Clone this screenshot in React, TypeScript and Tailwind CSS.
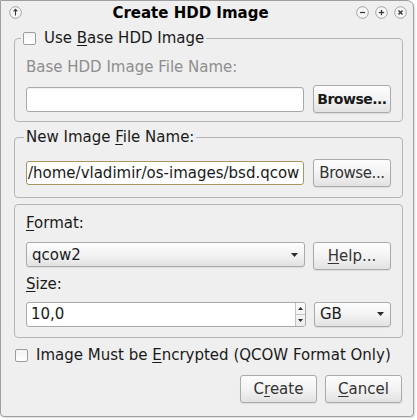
import React from 'react';

function TitleIcon({ kind }: { kind: 'up' | 'min' | 'max' | 'close' }) {
  return (
    <svg width="13" height="13" viewBox="0 0 13 13">
      <circle cx="6.5" cy="6.5" r="5.8" fill="#f7f7f7" stroke="#a2a2a2" strokeWidth="1" />
      {kind === 'up' && (
        <>
          <line x1="6.5" y1="3.5" x2="6.5" y2="9.5" stroke="#3a3a3a" strokeWidth="1.1" />
          <path d="M4.6 5.4 L6.5 3.3 L8.4 5.4" fill="none" stroke="#3a3a3a" strokeWidth="1.1" />
        </>
      )}
      {kind === 'min' && <line x1="4" y1="6.5" x2="9" y2="6.5" stroke="#3a3a3a" strokeWidth="1.3" />}
      {kind === 'max' && (
        <>
          <line x1="3.8" y1="6.5" x2="9.2" y2="6.5" stroke="#3a3a3a" strokeWidth="1.3" />
          <line x1="6.5" y1="3.8" x2="6.5" y2="9.2" stroke="#3a3a3a" strokeWidth="1.3" />
        </>
      )}
      {kind === 'close' && (
        <>
          <line x1="4.5" y1="4.5" x2="8.5" y2="8.5" stroke="#3a3a3a" strokeWidth="1.5" />
          <line x1="8.5" y1="4.5" x2="4.5" y2="8.5" stroke="#3a3a3a" strokeWidth="1.5" />
        </>
      )}
    </svg>
  );
}

function CheckBox() {
  return (
    <span className="inline-block w-[13px] h-[13px] rounded-[2px] border border-[#9d9d9d] bg-linear-to-b from-[#f4f4f4] to-[#ffffff] shrink-0" />
  );
}

function Arrow() {
  return (
    <svg width="7" height="4" viewBox="0 0 7 4" className="shrink-0">
      <path d="M0 0 L7 0 L3.5 4 Z" fill="#2a2a2a" />
    </svg>
  );
}

function Button({ children, bold, className = '' }: { children: React.ReactNode; bold?: boolean; className?: string }) {
  return (
    <div
      className={`h-[28px] flex items-center justify-center rounded-[3px] border border-[#aaaaaa] bg-linear-to-b from-[#fdfdfd] via-[#f3f3f3] to-[#e2e2e2] shadow-[0_1px_1px_rgba(0,0,0,0.08)] shrink-0 ${bold ? 'font-bold text-[14px] tracking-[-0.5px] text-[#1a1a1a]' : 'text-[#333]'} ${className}`}
    >
      {children}
    </div>
  );
}

function Combo({ value, className = '' }: { value: string; className?: string }) {
  return (
    <div
      className={`flex items-center justify-between pl-[5px] pr-[6px] rounded-[3px] border border-[#aaaaaa] bg-linear-to-b from-[#fdfdfd] via-[#f3f3f3] to-[#e2e2e2] shadow-[0_1px_1px_rgba(0,0,0,0.08)] ${className}`}
    >
      <span>{value}</span>
      <Arrow />
    </div>
  );
}

export default function App() {
  return (
    <div className="w-[417px] h-[420px] bg-white">
      <div className="w-[414px] h-[417px] flex flex-col bg-[#efefef] border border-[#9f9f9f] rounded-tr-[7px] rounded-b-[4px] font-['DejaVu_Sans',sans-serif] text-[15px] leading-[18px] text-[#1a1a1a] shadow-[1px_1px_2px_rgba(0,0,0,0.15)]">
        {/* title bar */}
        <div className="h-[24px] flex items-center pl-[8px] pr-[6px] pb-[1px]">
          <TitleIcon kind="up" />
          <div className="flex-1 text-center font-bold text-[15px] text-black pl-[3px]">Create HDD Image</div>
          <div className="flex items-center gap-[6px]">
            <TitleIcon kind="min" />
            <TitleIcon kind="max" />
            <TitleIcon kind="close" />
          </div>
        </div>

        <div className="flex flex-col pl-[13px] pr-[10px]">
          {/* base image group */}
          <fieldset className="mt-[4px] min-w-0 border border-[#b5b5b5] rounded-[4px] px-[11px] pb-[8px]">
            <legend className="-ml-[5px] px-[2px] h-[18px] flex items-center gap-[8px]">
              <CheckBox />
              <span>
                Use <span className="underline underline-offset-[2px]">B</span>ase HDD Image
              </span>
            </legend>
            <div className="mt-[11px] text-[#8e8e8e]">Base HDD Image File Name:</div>
            <div className="mt-[9px] flex items-center gap-[9px]">
              <div className="flex-1 h-[25px] rounded-[3px] border border-[#a9a9a9] bg-white shadow-[inset_0_1px_1px_rgba(0,0,0,0.06)]" />
              <Button bold className="w-[78px]">Browse...</Button>
            </div>
          </fieldset>

          {/* new image group */}
          <fieldset className="mt-[6px] min-w-0 border border-[#b5b5b5] rounded-[4px] px-[11px] pb-[10px]">
            <legend className="-ml-[2px] px-[2px] h-[18px] flex items-center">
              <span>
                New Image <span className="underline underline-offset-[2px]">F</span>ile Name:
              </span>
            </legend>
            <div className="mt-[13px] flex items-center gap-[9px]">
              <div className="flex-1 h-[24px] flex items-center pl-[1px] rounded-[3px] border border-[#a8955f] bg-white overflow-hidden whitespace-nowrap">
                /home/vladimir/os-images/bsd.qcow
              </div>
              <Button className="w-[78px] tracking-[-0.4px]">Browse...</Button>
            </div>
          </fieldset>

          {/* format group */}
          <fieldset className="mt-[6px] min-w-0 border border-[#b5b5b5] rounded-[4px] px-[11px] pt-[9px] pb-[10px]">
            <div>
              <span className="underline underline-offset-[2px]">F</span>ormat:
            </div>
            <div className="mt-[10px] h-[27px] flex items-start gap-[8px]">
              <Combo value="qcow2" className="flex-1 h-[25px]" />
              <Button className="w-[78px] h-[27px]">
                <span>
                  <span className="underline underline-offset-[2px]">H</span>elp...
                </span>
              </Button>
            </div>
            <div className="mt-[6px]">
              <span className="underline underline-offset-[2px]">S</span>ize:
            </div>
            <div className="mt-[8px] h-[26px] flex items-center gap-[8px]">
              <div className="flex-1 h-[25px] flex rounded-[3px] border border-[#a9a9a9] bg-white overflow-hidden">
                <div className="flex-1 flex items-center pl-[4px]">10,0</div>
                <div className="w-[10px] flex flex-col border-l border-[#c4c4c4] bg-linear-to-b from-[#fbfbfb] to-[#ececec]">
                  <div className="flex-1 flex items-center justify-center border-b border-[#c4c4c4]">
                    <svg width="5" height="3" viewBox="0 0 5 3">
                      <path d="M0 3 L5 3 L2.5 0 Z" fill="#2a2a2a" />
                    </svg>
                  </div>
                  <div className="flex-1 flex items-center justify-center">
                    <svg width="5" height="3" viewBox="0 0 5 3">
                      <path d="M0 0 L5 0 L2.5 3 Z" fill="#2a2a2a" />
                    </svg>
                  </div>
                </div>
              </div>
              <Combo value="GB" className="w-[77px] h-[25px]" />
            </div>
          </fieldset>

          {/* encryption */}
          <div className="mt-[8px] ml-[1px] h-[18px] flex items-center gap-[8px]">
            <CheckBox />
            <span>
              Image Must be <span className="underline underline-offset-[2px]">E</span>ncrypted (QCOW Format Only)
            </span>
          </div>

          {/* buttons */}
          <div className="mt-[11px] flex justify-end gap-[8px] pr-[1px]">
            <Button className="w-[77px] h-[27px]">
              <span>
                C<span className="underline underline-offset-[2px]">r</span>eate
              </span>
            </Button>
            <Button className="w-[77px] h-[27px]">
              <span>
                <span className="underline underline-offset-[2px]">C</span>ancel
              </span>
            </Button>
          </div>
        </div>
      </div>
    </div>
  );
}
